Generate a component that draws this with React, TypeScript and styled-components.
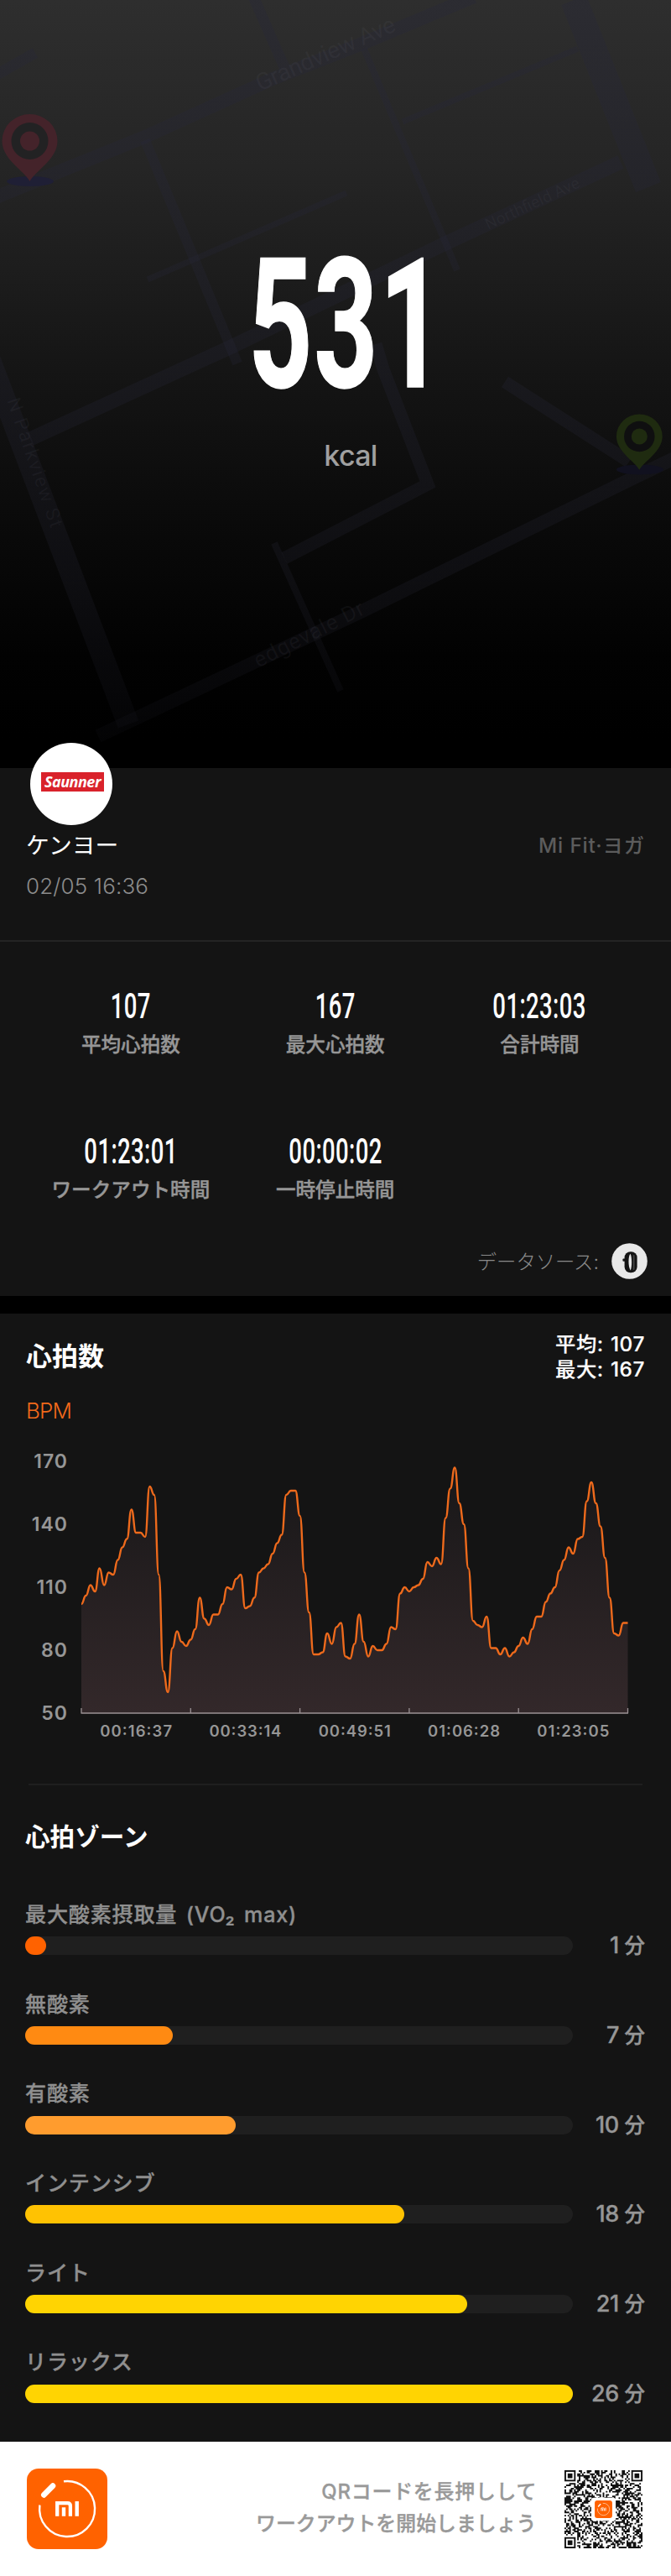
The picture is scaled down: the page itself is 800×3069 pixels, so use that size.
import React from "react";
import styled, { createGlobalStyle } from "styled-components";

const GlobalStyle = createGlobalStyle`
  *, *::before, *::after { box-sizing: border-box; }
  body { margin: 0; background: #000; }
`;

const sans = `Inter, "Noto Sans CJK JP", sans-serif`;
const digits = `Roboto, "Noto Sans CJK JP", sans-serif`;

const Page = styled.main`
  width: 800px;
  height: 3069px;
  overflow: hidden;
  display: flex;
  flex-direction: column;
  background: #141414;
  font-family: ${sans};
  color: #fff;
  white-space: nowrap;
`;

/* ---------- hero ---------- */

const Hero = styled.section`
  position: relative;
  height: 915px;
  flex: none;
  display: flex;
  flex-direction: column;
  align-items: center;
  background: linear-gradient(180deg, #2e2e2e 0, #252525 200px, #1d1d1d 320px, #131313 470px, #090909 640px, #020202 780px, #000 880px);
`;

const MapLayer = styled.svg`
  position: absolute;
  inset: 0;
`;

const Calories = styled.div`
  position: relative;
  margin: 280px 0 0 27px;
  height: 216px;
  line-height: 216px;
  font-family: ${digits};
  font-weight: 700;
  font-size: 216px;
  letter-spacing: 3px;
  -webkit-text-stroke: 1.5px #fff;
  transform: scaleX(0.615);
`;

const CaloriesUnit = styled.div`
  position: relative;
  margin: 20px 0 0 36px;
  height: 54px;
  line-height: 54px;
  font-size: 34px;
  font-weight: 500;
  letter-spacing: -0.7px;
  color: #a0a0a0;
`;

/* ---------- profile ---------- */

const Profile = styled.section`
  height: 207px;
  flex: none;
  padding: 0 32px 0 31px;
  border-bottom: 2px solid #242424;
`;

const Avatar = styled.div`
  position: relative;
  width: 98px;
  height: 98px;
  margin: -30px 0 2px 5px;
  padding: 3px 0 0 3px;
  border-radius: 50%;
  background: #fff;
  display: flex;
  align-items: flex-start;
  justify-content: center;
`;

const AvatarTag = styled.div`
  margin-top: 32px;
  width: 75px;
  height: 23px;
  background: #d9222b;
  text-align: center;
  font: italic 700 18px/22px "Open Sans", sans-serif;
  letter-spacing: -0.5px;
`;

const ProfileRow = styled.div`
  height: 40px;
  display: flex;
  align-items: center;
  justify-content: space-between;
`;

const UserName = styled.span`
  font-size: 27.8px;
`;

const AppName = styled.span`
  font-size: 24.3px;
  letter-spacing: 0.9px;
  margin-right: -1px;
  color: #5c5c5c;
  font-weight: 500;
`;

const When = styled.div`
  margin-top: 11px;
  line-height: 40px;
  font-size: 26px;
  font-weight: 300;
  letter-spacing: 0.15px;
  color: #8c8c8c;
`;

/* ---------- stats ---------- */

const Stats = styled.section`
  height: 422px;
  flex: none;
  padding: 55px 28px 0 34px;
`;

const StatGrid = styled.div`
  display: grid;
  grid-template-columns: repeat(3, 243.8px);
  grid-auto-rows: 173px;
`;

const Stat = styled.div`
  display: flex;
  flex-direction: column;
  align-items: center;
`;

const StatValue = styled.div`
  height: 44px;
  line-height: 44px;
  font-family: ${digits};
  font-size: 42px;
  font-weight: 500;
  letter-spacing: 0.6px;
  transform: scaleX(0.655);
`;

const StatLabel = styled.div`
  margin-top: 6px;
  height: 36px;
  line-height: 36px;
  font-size: 23.6px;
  font-weight: 500;
  color: #969696;
  -webkit-text-stroke: 0.4px #969696;
`;

const Source = styled.div`
  height: 44px;
  margin-top: -43px;
  display: flex;
  align-items: center;
  justify-content: flex-end;
  gap: 15px;
  font-size: 23.3px;
  font-weight: 300;
  color: #8a8a8a;
`;

const Band = styled.div`
  height: 21px;
  flex: none;
  background: #000;
`;

/* ---------- heart rate ---------- */

const HeartRate = styled.section`
  height: 560px;
  flex: none;
  padding: 21px 31px 0;
`;

const SectionHead = styled.div`
  height: 60px;
  display: flex;
  align-items: center;
  justify-content: space-between;
`;

const Title = styled.h2`
  margin: 0;
  font-size: 31px;
  font-weight: 700;
  line-height: 44px;
`;

const Summary = styled.div`
  font-size: 24.3px;
  line-height: 30px;
  font-weight: 500;
  letter-spacing: 0.6px;
  word-spacing: 1px;
  -webkit-text-stroke: 0.2px #fff;
`;

const Unit = styled.div`
  margin-top: 15px;
  line-height: 40px;
  font-size: 26px;
  font-weight: 300;
  letter-spacing: -0.8px;
  color: #f26a1b;
`;

const Chart = styled.svg`
  display: block;
  margin: 0 0 0 -31px;
`;

const Divider = styled.div`
  height: 2px;
  flex: none;
  margin: 0 34px;
  background: #1f1f1f;
`;

/* ---------- zones ---------- */

const Zones = styled.section`
  flex: 1;
  padding: 39px 31px 0 30px;
`;

const ZoneTitle = styled(Title)`
  font-size: 29.6px;
  margin-bottom: 53px;
`;

const Zone = styled.div`
  height: 106.65px;
`;

const ZoneName = styled.div`
  height: 36px;
  line-height: 36px;
  font-size: 25.1px;
  font-weight: 500;
  letter-spacing: 0.8px;
  word-spacing: 3px;
  color: #8f8f8f;
  -webkit-text-stroke: 0.35px #8f8f8f;
`;

const ZoneRow = styled.div`
  margin-top: 8.3px;
  height: 22px;
  display: flex;
  align-items: center;
  justify-content: space-between;
`;

const Track = styled.div`
  width: 653px;
  height: 22px;
  border-radius: 11px;
  background: #1f1f1f;
`;

const Fill = styled.div<{ $minutes: number; $color: string }>`
  width: ${(p) => (p.$minutes / 26) * 100}%;
  height: 100%;
  border-radius: 11px;
  background: ${(p) => p.$color};
`;

const Minutes = styled.div`
  display: flex;
  align-items: center;
  gap: 6.5px;
  line-height: 30px;
  font-size: 24.5px;
  font-weight: 500;
  color: #969696;
  -webkit-text-stroke: 0.35px #969696;
`;

const MinuteCount = styled.span`
  font-size: 27px;
  letter-spacing: -0.3px;
`;

/* ---------- footer ---------- */

const Footer = styled.footer`
  height: 160px;
  flex: none;
  padding: 0 34px 0 32px;
  background: #fff;
  display: flex;
  align-items: center;
`;

const Invite = styled.p`
  flex: 1;
  margin: -3px 33.5px 0 0;
  text-align: right;
  font-size: 23.9px;
  line-height: 38px;
  font-weight: 500;
  color: #999;
  -webkit-text-stroke: 0.35px #999;
`;

const InviteLead = styled.span`
  letter-spacing: 0.8px;
  margin-right: -0.8px;
`;

const roads: { d: string; w: number }[] = [
  { d: "M-10 238 L0 233 L173 163 L327 93 L429 53 L565 -4", w: 16 },
  { d: "M-4 89 L42 63", w: 13 },
  { d: "M302 -4 L339 80", w: 13 },
  { d: "M173 167 L283 433", w: 12 },
  { d: "M176 333 L413 230", w: 7 },
  { d: "M434 58 L545 322", w: 8 },
  { d: "M480 145 L689 58", w: 7 },
  { d: "M684 0 L773 223", w: 32 },
  { d: "M740 193 L531 290 L276 413 L36 523", w: 17 },
  { d: "M-14 424 L153 863", w: 26 },
  { d: "M448 410 L457 440 L510 577 L339 665", w: 15 },
  { d: "M327 647 L406 823", w: 8 },
  { d: "M602 455 L750 550", w: 15 },
  { d: "M804 546 L760 567 L434 727 L168 853 L117 877", w: 16 },
];

function Pin({ x, y, s, color, hole }: { x: number; y: number; s: number; color: string; hole: string }) {
  return (
    <g transform={`translate(${x} ${y}) scale(${s})`}>
      <path d="M0 48 C-6 36 -33 22 -33 0 A33 32 0 0 1 33 0 C33 22 6 36 0 48Z" fill={color} />
      <circle r="22" fill={hole} />
      <circle r="11.5" fill={color} />
    </g>
  );
}

function StreetMap() {
  return (
    <MapLayer width="800" height="915" viewBox="0 0 800 915" fontFamily="Roboto, sans-serif">
      <defs>
        <linearGradient id="road" gradientUnits="userSpaceOnUse" x1="0" y1="0" x2="0" y2="915">
          <stop offset="0" stopColor="#26263a" stopOpacity="0.3" />
          <stop offset="0.5" stopColor="#262638" stopOpacity="0.26" />
          <stop offset="0.75" stopColor="#262634" stopOpacity="0.24" />
          <stop offset="0.9" stopColor="#262634" stopOpacity="0.15" />
          <stop offset="1" stopColor="#262634" stopOpacity="0.05" />
        </linearGradient>
      </defs>
      <g fill="none" stroke="url(#road)" strokeLinejoin="miter">
        {roads.map((r) => (
          <path key={r.d} d={r.d} strokeWidth={r.w} />
        ))}
      </g>
      <g fill="#70707c">
        <text transform="translate(310 109) rotate(-24)" fontSize="28" textLength="179" fillOpacity="0.1">Grandview Ave</text>
        <text transform="translate(582 274) rotate(-25)" fontSize="19" textLength="122" fillOpacity="0.09">Northfield Ave</text>
        <text transform="translate(8 477) rotate(71)" fontSize="23" textLength="162" fillOpacity="0.09">N Parkview St</text>
        <text transform="translate(308 796) rotate(-27)" fontSize="26" textLength="144" fillOpacity="0.09">edgevale Dr</text>
      </g>
      <ellipse cx="36" cy="216" rx="28" ry="6" fill="#1f1f35" />
      <Pin x={35.5} y={168} s={1} color="#44232a" hole="#222223" />
      <ellipse cx="763" cy="559.5" rx="28" ry="6" fill="#11111f" />
      <Pin x={762.3} y={520} s={0.83} color="#1f2b10" hole="#0f0f10" />
    </MapLayer>
  );
}

const bpm = [
  102, 106, 111, 108, 119, 111, 117, 116, 123, 129, 133, 147, 136, 136, 134, 158, 154, 116, 70, 60,
  81, 89, 84, 82, 85, 90, 105, 95, 92, 97, 97, 102, 110, 109, 114, 116, 100, 101, 105, 117,
  119, 121, 126, 131, 135, 154, 156, 156, 144, 117, 98, 78, 78, 79, 88, 83, 91, 93, 77, 76,
  83, 97, 84, 77, 82, 80, 80, 83, 91, 90, 107, 110, 108, 110, 111, 114, 122, 120, 124, 121,
  143, 157, 167, 150, 140, 119, 94, 92, 91, 96, 81, 81, 78, 81, 77, 79, 82, 86, 83, 90,
  96, 96, 103, 107, 110, 118, 123, 129, 126, 133, 134, 151, 160, 150, 139, 124, 105, 88, 87, 93, 93,
];

const LEFT = 97;
const RIGHT = 748.5;
const BASE = 340;
const px = (i: number) => LEFT + ((RIGHT - LEFT) * i) / (bpm.length - 1);
const py = (v: number) => BASE - (v - 50) * 2.5;

const line = bpm.reduce((d, v, i) => {
  if (i === 0) return `M${px(0)} ${py(v)}`;
  const mid = (px(i - 1) + px(i)) / 2;
  return `${d} C${mid} ${py(bpm[i - 1])} ${mid} ${py(v)} ${px(i)} ${py(v)}`;
}, "");

const times = ["00:16:37", "00:33:14", "00:49:51", "01:06:28", "01:23:05"];

function HeartChart() {
  const step = (RIGHT - LEFT) / 5;
  return (
    <Chart width="800" height="380" viewBox="0 0 800 380" fontFamily={sans}>
      <defs>
        <linearGradient id="area" gradientUnits="userSpaceOnUse" x1="0" y1="48" x2="0" y2={BASE}>
          <stop offset="0" stopColor="#181718" />
          <stop offset="1" stopColor="#33282a" />
        </linearGradient>
      </defs>
      <path d={`${line} L${RIGHT} ${BASE} L${LEFT} ${BASE}Z`} fill="url(#area)" />
      <path d={line} fill="none" stroke="#ee6a1c" strokeWidth="2.4" strokeLinejoin="round" />
      <path
        d={`M${LEFT - 0.5} ${BASE} H${RIGHT + 0.5}` + [0, 1, 2, 3, 4, 5].map((i) => `M${LEFT + i * step} ${BASE} v-6`).join("")}
        fill="none"
        stroke="#9a9194"
        strokeWidth="1.3"
      />
      <g fill="#969696" fontSize="23" fontWeight="600" textAnchor="end">
        {[170, 140, 110, 80, 50].map((v) => (
          <text key={v} x="81" y={py(v) + 7.5} letterSpacing="1">{v}</text>
        ))}
      </g>
      <g fill="#969696" fontSize="18.5" fontWeight="600" textAnchor="middle">
        {times.map((t, i) => (
          <text key={t} x={LEFT + step * (i + 0.5)} y="368" textLength="86">{t}</text>
        ))}
      </g>
    </Chart>
  );
}

function AppLogo({ size }: { size: number }) {
  return (
    <svg width={size} height={size} viewBox="0 0 96 96">
      <rect width="96" height="96" rx="14" fill="#ff6200" />
      <path d="M44 15.3 A33 33 0 1 1 15.4 43.5" fill="none" stroke="#fff" strokeWidth="2.4" />
      <path d="M20.3 31.4 L31 20.6" stroke="#fff" strokeWidth="6.6" strokeLinecap="round" />
      <path d="M36.2 56.7 V41.1 H48.5 Q51.9 41.1 51.9 44.5 V56.7" fill="none" stroke="#fff" strokeWidth="4.3" />
      <path d="M44 46.3 V56.7 M59.7 39 V56.7" stroke="#fff" strokeWidth="4.4" />
    </svg>
  );
}

const N = 49;
const finders = [[0, 0], [N - 7, 0], [0, N - 7]];

function buildQr() {
  let seed = 20531;
  let d = "";
  for (let y = 0; y < N; y++) {
    for (let x = 0; x < N; x++) {
      seed = (seed * 1103515245 + 12345) % 2147483648;
      const on = (seed >> 12) % 100 < 50;
      const nearFinder = finders.some(([fx, fy]) => x >= fx - 1 && x <= fx + 7 && y >= fy - 1 && y <= fy + 7);
      if (on && !nearFinder) d += `M${x} ${y}h1v1h-1z`;
    }
  }
  return d;
}

const qrPath = buildQr();

function QrCode() {
  return (
    <svg width="93" height="93" viewBox={`0 0 ${N} ${N}`}>
      <path d={qrPath} fill="#111" />
      {finders.map(([x, y]) => (
        <g key={`${x}-${y}`}>
          <rect x={x + 0.5} y={y + 0.5} width="6" height="6" fill="#fff" stroke="#111" />
          <rect x={x + 2} y={y + 2} width="3" height="3" fill="#111" />
        </g>
      ))}
      <rect x="16.8" y="17.2" width="15.4" height="14.6" rx="1.6" fill="#fff" />
      <g transform="translate(19 19)">
        <AppLogo size={11} />
      </g>
    </svg>
  );
}

function BandIcon() {
  return (
    <svg width="43" height="43" viewBox="0 0 43 43">
      <circle cx="21.5" cy="21.5" r="21.3" fill="#e8e8e8" />
      <rect x="13.4" y="18.6" width="4" height="3.2" rx="1" fill="#1a1a1a" />
      <rect x="15.6" y="10.3" width="15" height="25" rx="7" fill="#141414" />
      <path d="M22.6 12.8 C19.8 15 19.6 28.5 22.8 32.6 C24.6 28 24.6 17 22.6 12.8Z" fill="#e8e8e8" />
      <path d="M26.6 15 V31" stroke="#444" strokeWidth="1.8" strokeLinecap="round" />
    </svg>
  );
}

const stats = [
  ["107", "平均心拍数"],
  ["167", "最大心拍数"],
  ["01:23:03", "合計時間"],
  ["01:23:01", "ワークアウト時間"],
  ["00:00:02", "一時停止時間"],
];

const zones = [
  { name: "最大酸素摂取量 (VO₂ max)", minutes: 1, color: "#ff6200" },
  { name: "無酸素", minutes: 7, color: "#ff8a12" },
  { name: "有酸素", minutes: 10, color: "#ff9c2e" },
  { name: "インテンシブ", minutes: 18, color: "#ffc202" },
  { name: "ライト", minutes: 21, color: "#ffd402" },
  { name: "リラックス", minutes: 26, color: "#ffd402" },
];

export default function App() {
  return (
    <Page lang="ja">
      <GlobalStyle />
      <Hero>
        <StreetMap />
        <Calories>531</Calories>
        <CaloriesUnit>kcal</CaloriesUnit>
      </Hero>

      <Profile>
        <Avatar>
          <AvatarTag>Saunner</AvatarTag>
        </Avatar>
        <ProfileRow>
          <UserName>ケンヨー</UserName>
          <AppName>Mi Fit·ヨガ</AppName>
        </ProfileRow>
        <When>02/05 16:36</When>
      </Profile>

      <Stats>
        <StatGrid>
          {stats.map(([value, label]) => (
            <Stat key={label}>
              <StatValue>{value}</StatValue>
              <StatLabel>{label}</StatLabel>
            </Stat>
          ))}
        </StatGrid>
        <Source>
          データソース:
          <BandIcon />
        </Source>
      </Stats>

      <Band />

      <HeartRate>
        <SectionHead>
          <Title>心拍数</Title>
          <Summary>
            平均: 107
            <br />
            最大: 167
          </Summary>
        </SectionHead>
        <Unit>BPM</Unit>
        <HeartChart />
      </HeartRate>

      <Divider />

      <Zones>
        <ZoneTitle>心拍ゾーン</ZoneTitle>
        {zones.map((z) => (
          <Zone key={z.name}>
            <ZoneName>{z.name}</ZoneName>
            <ZoneRow>
              <Track>
                <Fill $minutes={z.minutes} $color={z.color} />
              </Track>
              <Minutes>
                <MinuteCount>{z.minutes}</MinuteCount>分
              </Minutes>
            </ZoneRow>
          </Zone>
        ))}
      </Zones>

      <Footer>
        <AppLogo size={96} />
        <Invite>
          <InviteLead>QRコードを長押しして</InviteLead>
          <br />
          ワークアウトを開始しましょう
        </Invite>
        <QrCode />
      </Footer>
    </Page>
  );
}
